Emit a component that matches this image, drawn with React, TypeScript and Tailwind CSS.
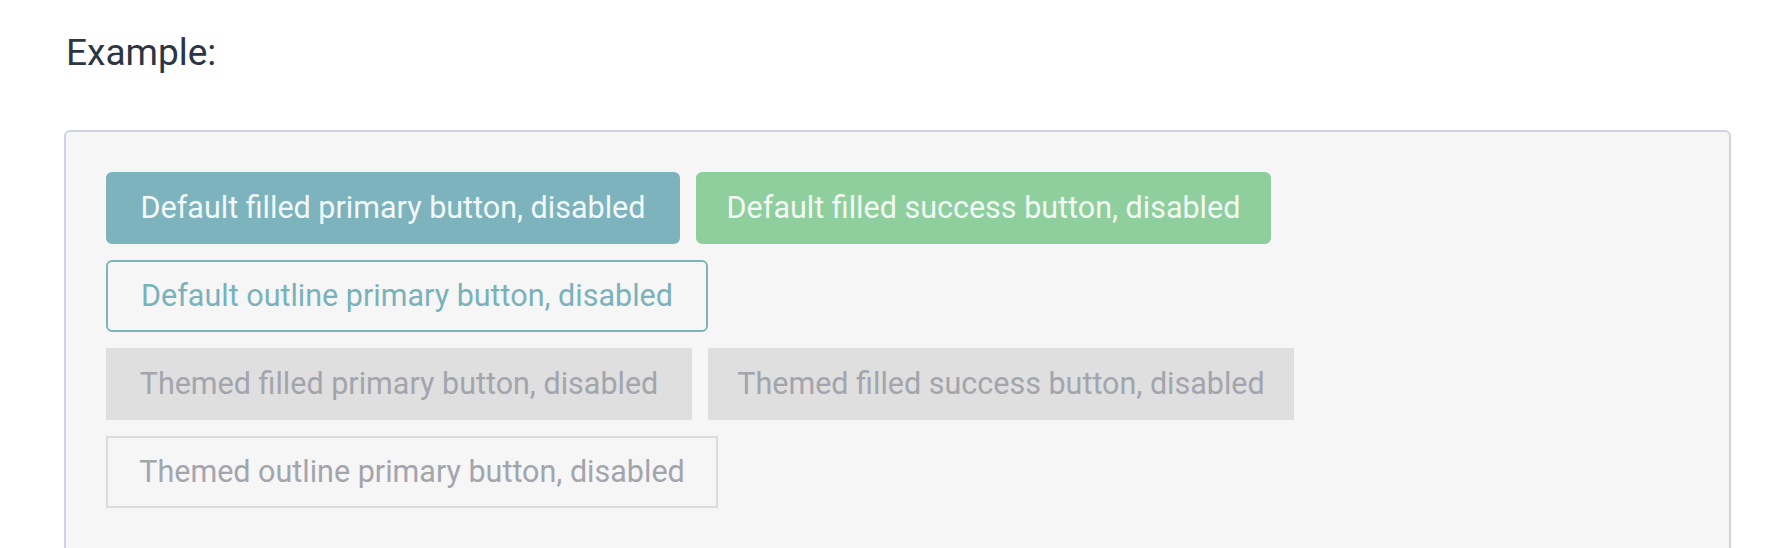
import React from "react";

const font = { fontFamily: "Roboto, 'Open Sans', 'Liberation Sans', sans-serif" };

function Btn({ className, children }: { className: string; children: React.ReactNode }) {
  return (
    <button
      disabled
      className={`flex h-[72px] shrink-0 items-center justify-center whitespace-nowrap border-2 text-[30.5px] leading-none ${className}`}
      style={font}
    >
      {children}
    </button>
  );
}

export default function App() {
  return (
    <div className="h-[548px] overflow-hidden bg-white pl-[64px] pr-[49px] pt-[31px]" style={font}>
      <h2 className="pl-[2px] text-[37px] leading-[44px] font-normal text-[#2b3544]">Example:</h2>
      <div className="mt-[55px] rounded-[6px] border-2 border-[#cfd2e0] bg-[#f6f6f6] px-[40px] pt-[40px] pb-[60px]">
        <div className="flex flex-col gap-4">
          <div className="flex gap-4">
            <Btn className="w-[574px] rounded-[6px] border-[#7db3bd] bg-[#7db3bd] text-[#f3f8f9]">
              Default filled primary button, disabled
            </Btn>
            <Btn className="w-[575px] rounded-[6px] border-[#8fce9d] bg-[#8fce9d] text-[#f3f9f4]">
              Default filled success button, disabled
            </Btn>
          </div>
          <div className="flex gap-4">
            <Btn className="w-[602px] rounded-[6px] border-[#7db3bd] bg-transparent text-[#7ab2bc]">
              Default outline primary button, disabled
            </Btn>
          </div>
          <div className="flex gap-4">
            <Btn className="w-[586px] border-[#dfdfdf] bg-[#dfdfdf] text-[#a3a5ad]">
              Themed filled primary button, disabled
            </Btn>
            <Btn className="w-[586px] border-[#dfdfdf] bg-[#dfdfdf] text-[#a3a5ad]">
              Themed filled success button, disabled
            </Btn>
          </div>
          <div className="flex gap-4">
            <Btn className="w-[612px] border-[#dcdcdc] bg-transparent text-[#a3a5ad]">
              Themed outline primary button, disabled
            </Btn>
          </div>
        </div>
      </div>
    </div>
  );
}
